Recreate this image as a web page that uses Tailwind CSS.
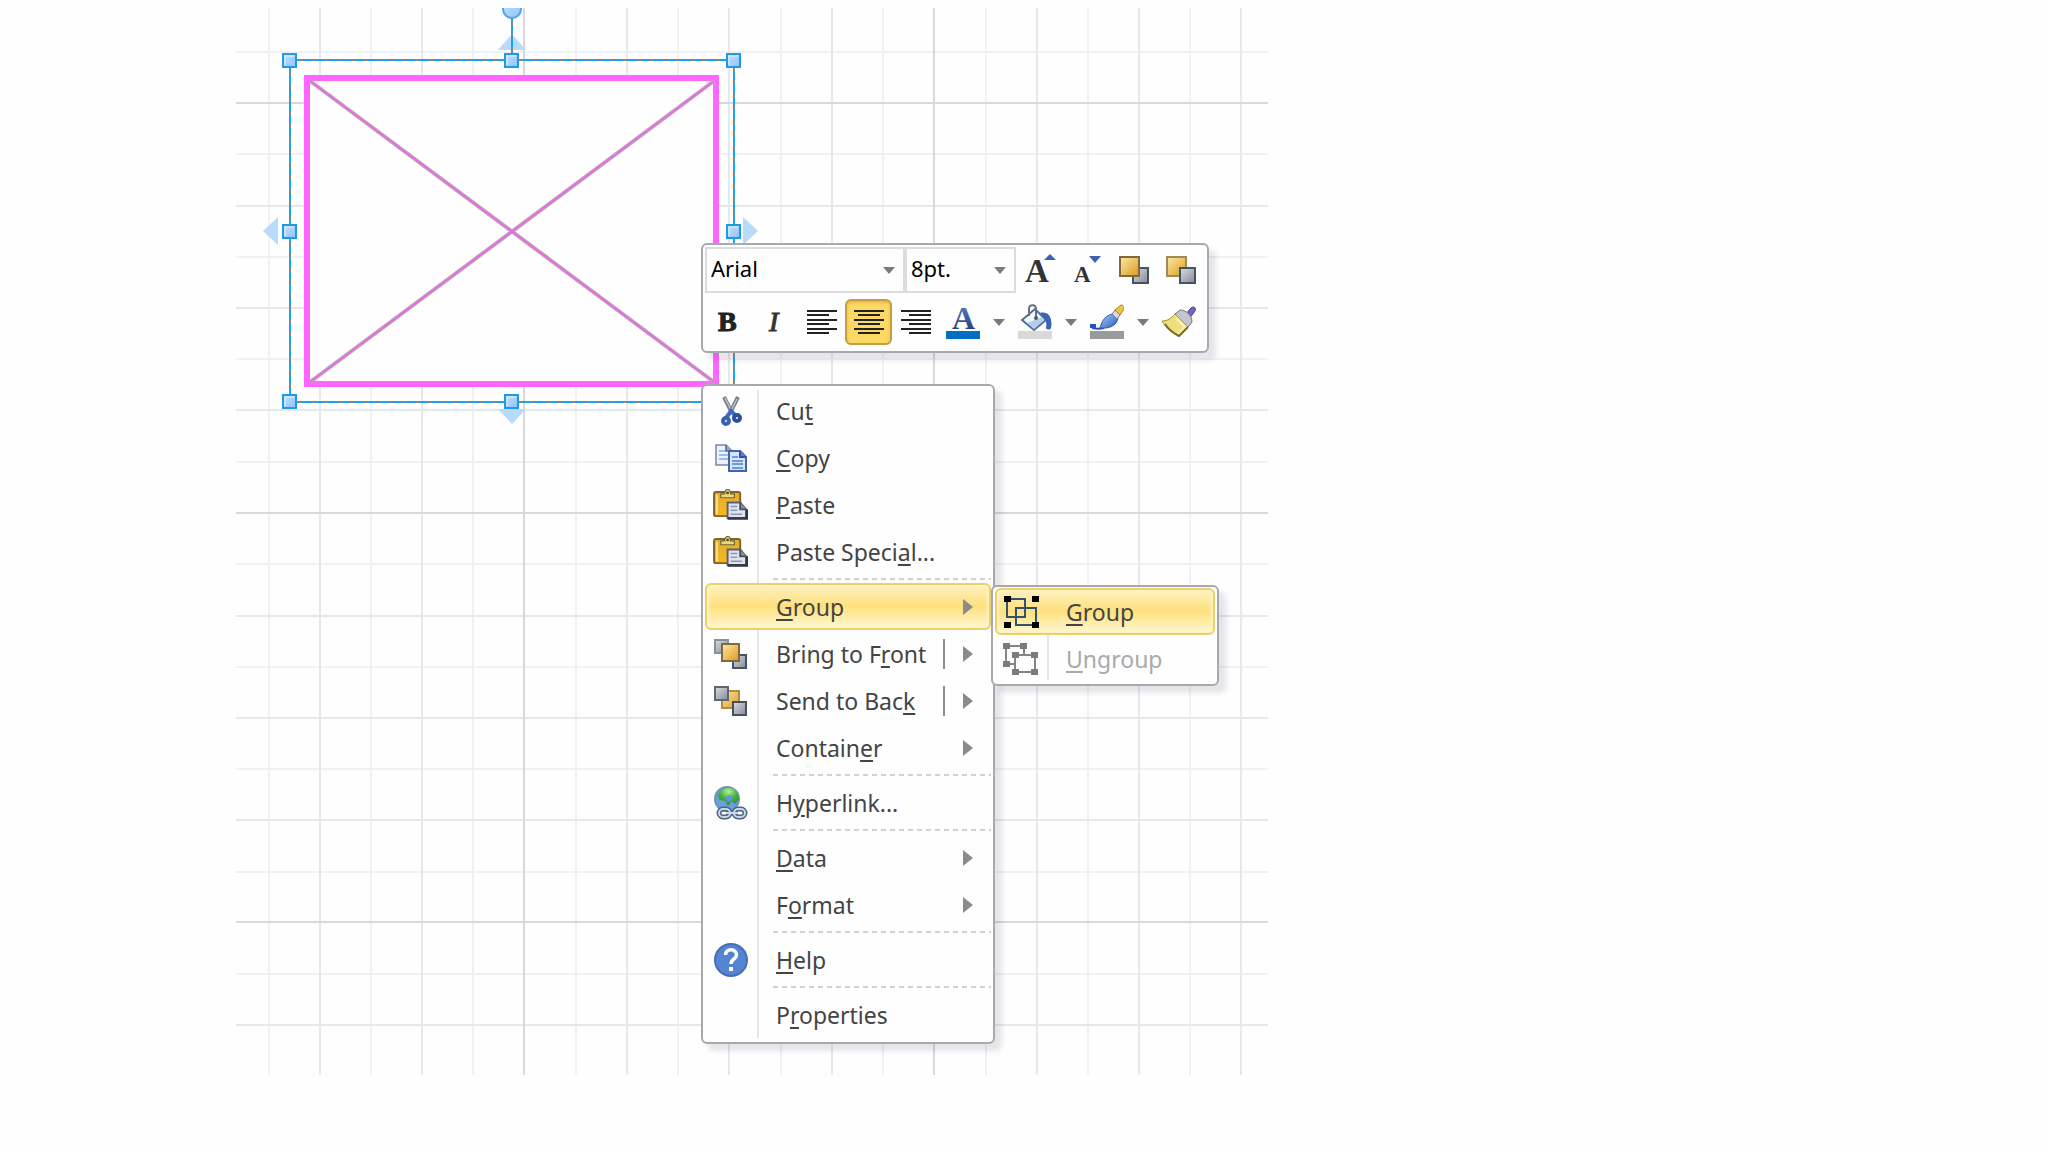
<!doctype html>
<html lang="en">
  <head>
    <meta charset="UTF-8" />
    <meta name="viewport" content="width=device-width, initial-scale=1.0" />
    <title>Drawing</title>
    <script src="https://cdn.jsdelivr.net/npm/@tailwindcss/browser@4"></script>
  </head>
  <body class="bg-[#fefefe] font-['Noto_Sans',sans-serif] text-[#444]">
    <!-- shared icon parts -->
    <svg class="absolute size-0" aria-hidden="true">
      <defs>
        <linearGradient id="gold" x1="0" y1="0" x2="1" y2="1">
          <stop offset="0" stop-color="#fde9a9" />
          <stop offset="1" stop-color="#dd9a1c" />
        </linearGradient>
        <linearGradient id="board" x1="0" y1="0" x2="0" y2="1">
          <stop offset="0" stop-color="#dcae3c" />
          <stop offset="1" stop-color="#f9b717" />
        </linearGradient>
        <linearGradient id="steel" x1="0" y1="0" x2="1" y2="1">
          <stop offset="0" stop-color="#d9dce3" />
          <stop offset="1" stop-color="#848b96" />
        </linearGradient>
        <linearGradient id="sky" x1="0" y1="0" x2="1" y2="1">
          <stop offset="0" stop-color="#c6e2ff" />
          <stop offset="1" stop-color="#8cc2fb" />
        </linearGradient>
        <linearGradient id="blue" x1="0" y1="0" x2="1" y2="1">
          <stop offset="0" stop-color="#a9cdf8" />
          <stop offset="1" stop-color="#2858b8" />
        </linearGradient>
        <linearGradient id="ink" x1="0" y1="0" x2="0" y2="1">
          <stop offset="0" stop-color="#5b8ad6" />
          <stop offset="1" stop-color="#1d3163" />
        </linearGradient>
        <radialGradient id="land" cx="0.5" cy="0.2" r="0.8">
          <stop offset="0" stop-color="#b5f09a" />
          <stop offset="0.5" stop-color="#45b53c" />
          <stop offset="1" stop-color="#2c8a33" />
        </radialGradient>
        <symbol id="arrow-right" viewBox="0 0 10 16">
          <path d="M0 0l10 8-10 8z" fill="#8b8b8b" />
        </symbol>
        <symbol id="arrow-down" viewBox="0 0 12 7">
          <path d="M0 0h12L6 7z" fill="#7b7b7b" />
        </symbol>
        <symbol id="handle" viewBox="0 0 15 15">
          <rect x="1" y="1" width="13" height="13" fill="url(#sky)" stroke="#1e9ae6" stroke-width="2" />
          <path d="M3 12V3h9" fill="none" stroke="#e2f1ff" stroke-width="1" />
        </symbol>
        <symbol id="paste" viewBox="0 0 36 32">
          <rect x="1" y="3" width="27" height="25" rx="2" fill="url(#board)" stroke="#80632a" stroke-width="2" />
          <path d="M4 6v20" stroke="#fbdc8a" stroke-width="2" />
          <path d="M8 9V5h4c0-6 6-6 6 0h4v4z" fill="#ead67c" stroke="#75652f" stroke-width="1.200" />
          <circle cx="15" cy="4" r="1.500" fill="#5d5026" />
          <path d="M15 14h13l6 7v9H15z" fill="#dfe3ee" stroke="#59606f" stroke-width="2" />
          <path d="M28 14v7h6" fill="#8a92a4" stroke="#4a5160" stroke-width="2" />
          <path d="M35 21v9.500H15" fill="none" stroke="#2f3644" stroke-width="2.500" />
          <path d="M18 18h7M18 22h7M18 26h12" stroke="#8d99b6" stroke-width="1.500" />
        </symbol>
      </defs>
    </svg>

    <main class="relative min-h-screen overflow-hidden">
      <!-- page grid and selected shape -->
      <svg class="absolute left-[236px] top-2 w-[1032px]" viewBox="236 8 1032 1067" fill="none" role="img" aria-label="Selected shape">
        <g stroke-width="2">
          <path stroke="#f2f0f4" d="M236 52h1032M236 154h1032M236 257h1032M236 359h1032M236 462h1032M236 564h1032M236 667h1032M236 769h1032M236 872h1032M236 974h1032M269 8v1067M371 8v1067M473 8v1067M576 8v1067M678 8v1067M781 8v1067M883 8v1067M986 8v1067M1088 8v1067M1190 8v1067" />
          <path stroke="#e9e7ec" d="M236 206h1032M236 308h1032M236 410h1032M236 616h1032M236 718h1032M236 820h1032M236 1025h1032M320 8v1067M422 8v1067M627 8v1067M729 8v1067M832 8v1067M1037 8v1067M1139 8v1067M1241 8v1067" />
          <path stroke="#d9d7dc" d="M236 103h1032M236 513h1032M236 922h1032M524 8v1067M934 8v1067" />
        </g>
        <path d="M498 50l14-16 14 16zM498 409l14 15 14-15zM278 217l-15 14 15 14zM743 217l15 14-15 14z" fill="#b9dafb" />
        <rect x="307" y="78" width="409" height="306" fill="#fffeff" stroke="#ff66ff" stroke-width="6" />
        <path d="M310 81l404 301M714 81L310 382" stroke="#c3a9bd" stroke-width="4" />
        <path d="M310 81l404 301M714 81L310 382" stroke="#dd72dc" stroke-width="2" />
        <path d="M290 60h444v342H290zM512 60V18" stroke="#8a8580" stroke-width="2" />
        <path d="M290 60h444v342H290zM512 60V18" stroke="#18a2f4" stroke-width="2" stroke-dasharray="9 4" />
        <circle cx="512" cy="9" r="9" fill="url(#sky)" stroke="#4da6e4" stroke-width="2" />
        <g>
          <use href="#handle" x="282" y="53" width="15" height="15" />
          <use href="#handle" x="504" y="53" width="15" height="15" />
          <use href="#handle" x="726" y="53" width="15" height="15" />
          <use href="#handle" x="282" y="224" width="15" height="15" />
          <use href="#handle" x="726" y="224" width="15" height="15" />
          <use href="#handle" x="282" y="394" width="15" height="15" />
          <use href="#handle" x="504" y="394" width="15" height="15" />
        </g>
      </svg>

      <!-- mini toolbar -->
      <div
        role="toolbar"
        aria-label="Formatting"
        class="absolute left-[701px] top-[243px] w-[508px] rounded-md border-2 border-[#a9a8ad] bg-[#fefefe] px-0.5 pt-0.5 shadow-[7px_7px_5px_rgba(60,50,80,0.12)]"
      >
        <div class="flex h-[46px] items-center text-black">
          <label class="relative flex w-[200px] items-center">
            <select aria-label="Font" class="h-[46px] w-full appearance-none border-2 border-[#dcdbdf] pb-1 pl-1 text-[22px]/[36px]">
              <option>Arial</option>
            </select>
            <svg class="pointer-events-none absolute right-2.5 h-[7px] w-3"><use href="#arrow-down" /></svg>
          </label>
          <label class="relative flex w-[111px] items-center">
            <select aria-label="Font size" class="h-[46px] w-full appearance-none border-2 border-[#dcdbdf] pb-1 pl-1 text-[22px]/[36px]">
              <option>8pt.</option>
            </select>
            <svg class="pointer-events-none absolute right-2.5 h-[7px] w-3"><use href="#arrow-down" /></svg>
          </label>
          <button aria-label="Grow font" class="flex w-[47px] justify-center">
            <svg class="h-8 w-8 overflow-visible" viewBox="0 0 32 32">
              <text x="1" y="28" font-family="Liberation Serif" font-weight="bold" font-size="33" fill="#333">A</text>
              <path d="M20 6h12l-6-6z" fill="#3d62b0" />
            </svg>
          </button>
          <button aria-label="Shrink font" class="flex w-[47px] justify-center">
            <svg class="h-8 w-8 overflow-visible" viewBox="0 0 32 32">
              <text x="3" y="28" font-family="Liberation Serif" font-weight="bold" font-size="23" fill="#333">A</text>
              <path d="M18 2h12l-6 7z" fill="#3d62b0" />
            </svg>
          </button>
          <button aria-label="Bring forward" class="flex w-[47px] justify-center">
            <svg class="h-7 w-8" viewBox="0 0 32 28">
              <rect x="15" y="12" width="15" height="15" fill="url(#steel)" stroke="#47525f" stroke-width="2" />
              <rect x="2" y="1" width="19" height="19" fill="url(#gold)" stroke="#806a3c" stroke-width="2" />
            </svg>
          </button>
          <button aria-label="Send backward" class="flex w-[47px] justify-center">
            <svg class="h-7 w-8" viewBox="0 0 32 28">
              <rect x="2" y="1" width="19" height="19" fill="url(#gold)" stroke="#a08a58" stroke-width="2" />
              <rect x="15" y="12" width="15" height="15" fill="url(#steel)" stroke="#47525f" stroke-width="2" />
            </svg>
          </button>
        </div>

        <div class="flex h-[58px] items-center">
          <button aria-label="Bold" class="flex w-[46px] justify-center">
            <svg class="h-6 w-6 overflow-visible" viewBox="0 0 24 24">
              <text x="2" y="21" font-family="Liberation Serif" font-weight="bold" font-size="28" fill="#222" stroke="#222">B</text>
            </svg>
          </button>
          <button aria-label="Italic" class="flex w-[47px] justify-center">
            <svg class="h-6 w-6 overflow-visible" viewBox="0 0 24 24">
              <text x="6" y="21" font-family="Liberation Serif" font-style="italic" font-size="28" fill="#333" stroke="#333">I</text>
            </svg>
          </button>
          <button aria-label="Align left" class="flex w-[47px] justify-center">
            <svg class="h-6 w-[30px]" viewBox="0 0 30 24" stroke="#222" stroke-width="2">
              <path d="M0 1h30M0 5h22M0 10h30M0 14h22M0 19h30M0 23h22" />
            </svg>
          </button>
          <button aria-label="Center" aria-pressed="true" class="flex h-[46px] w-[47px] items-center justify-center rounded-md border-2 border-[#c79c45] bg-[#fcd963] shadow-[inset_0_2px_3px_#e8b64c]">
            <svg class="h-6 w-[30px]" viewBox="0 0 30 24" stroke="#222" stroke-width="2">
              <path d="M0 1h30M4 5h22M0 10h30M4 14h22M0 19h30M4 23h22" />
            </svg>
          </button>
          <button aria-label="Align right" class="flex w-[47px] justify-center">
            <svg class="h-6 w-[30px]" viewBox="0 0 30 24" stroke="#222" stroke-width="2">
              <path d="M0 1h30M8 5h22M0 10h30M8 14h22M0 19h30M8 23h22" />
            </svg>
          </button>
          <button aria-label="Font color" class="flex w-12 justify-center">
            <svg class="h-9 w-[34px] overflow-visible" viewBox="0 0 34 36">
              <text x="6" y="25" font-family="Liberation Serif" font-weight="bold" font-size="32" fill="url(#ink)">A</text>
              <rect y="27" width="34" height="8" fill="#0070c0" />
            </svg>
          </button>
          <button aria-label="Font color options" class="flex w-6 justify-center">
            <svg class="h-[7px] w-3"><use href="#arrow-down" /></svg>
          </button>
          <button aria-label="Fill" class="flex w-12 justify-center">
            <svg class="h-9 w-[34px]" viewBox="0 0 34 36">
              <path d="M4 16L17 5l11 11-12 10z" fill="#f2f7fc" stroke="#4d6d9c" stroke-width="2" />
              <path d="M9 19L24 13l2 3-10 9z" fill="#b3cdea" />
              <path d="M11 12V5c0-5 7-5 7 0v9" fill="none" stroke="#66717e" stroke-width="2" />
              <circle cx="18" cy="14" r="2" fill="#48596c" />
              <path d="M22 9c8-2 13 4 11 15-1 2-4 2-5 0 1-6 0-9-6-15z" fill="#3c63b8" />
              <rect y="27" width="34" height="8" fill="#d9d9d9" />
            </svg>
          </button>
          <button aria-label="Fill options" class="flex w-6 justify-center">
            <svg class="h-[7px] w-3"><use href="#arrow-down" /></svg>
          </button>
          <button aria-label="Line" class="flex w-12 justify-center">
            <svg class="h-9 w-[34px]" viewBox="0 0 34 36">
              <path d="M2 24c5 1 8 1 12 0" fill="none" stroke="#2b57b4" stroke-width="2" />
              <path d="M0 20h6v4H0z" fill="#2554b5" />
              <path d="M10 24c2-8 6-13 13-14l5 4c-1 6-6 11-18 10z" fill="url(#blue)" stroke="#2f5eb2" />
              <path d="M22 10l3-4 5 5-3 4z" fill="#d5d9e2" stroke="#707a8c" />
              <path d="M25 6l6-5c2 0 4 2 3 4l-4 6z" fill="#f0c53c" stroke="#a4801e" />
              <rect y="27" width="34" height="8" fill="#9a9c9b" />
            </svg>
          </button>
          <button aria-label="Line options" class="flex w-6 justify-center">
            <svg class="h-[7px] w-3"><use href="#arrow-down" /></svg>
          </button>
          <button aria-label="Format painter" class="flex w-12 justify-center">
            <svg class="h-8 w-[34px]" viewBox="0 0 34 32">
              <path d="M23 9l6-7c3-3 6 1 4 3l-6 8z" fill="#7a5fc2" stroke="#54409a" />
              <path d="M13 8l5-4c6 0 12 5 12 12l-4 5z" fill="#c3c6ce" stroke="#6c7078" />
              <path d="M13 8l13 13-9 9C10 27 4 22 0 15c6 0 9-3 13-7z" fill="#eadf7c" stroke="#a19440" />
              <path d="M14 12l9 9-7 7" fill="none" stroke="#f7f1b0" stroke-width="3" />
              <path d="M3 18c3 5 8 9 14 12l9-9" fill="none" stroke="#7d6a1d" stroke-width="2" />
            </svg>
          </button>
        </div>
      </div>

      <!-- context menu -->
      <div
        role="menu"
        aria-label="Shape"
        class="absolute left-[701px] top-[384px] w-[294px] rounded-md border-2 border-[#a9a8ad] bg-[#fefefe] px-0.5 pt-px pb-1 text-[23px]/[30px] shadow-[7px_7px_5px_rgba(60,50,80,0.12)]"
      >
        <div class="absolute inset-y-1 left-[54px] w-0.5 bg-[#e6e5e9]"></div>
        <button role="menuitem" class="relative flex h-[47px] w-full items-center">
          <span class="flex w-[51px] justify-center">
            <svg class="h-[30px] w-6" viewBox="0 0 24 30" fill="none">
              <path d="M5 1l7 14M19 1l-7 14" stroke="#7d828b" stroke-width="4" />
              <path d="M6 2l6 12M18 3l-5 10" stroke="#d9dce0" stroke-width="1" />
              <path d="M7 22l5-7 5 5" stroke="#3f68bf" stroke-width="4" />
              <circle cx="7" cy="25" r="3" stroke="#3960b4" stroke-width="4" />
              <circle cx="18" cy="22" r="3" stroke="#2c4f9f" stroke-width="4" />
            </svg>
          </span>
          <span class="pl-5">Cu<span class="underline decoration-2 underline-offset-3">t</span></span>
        </button>
        <button role="menuitem" class="relative flex h-[47px] w-full items-center">
          <span class="flex w-[51px] justify-center">
            <svg class="h-7 w-8" viewBox="0 0 32 28" fill="none">
              <path d="M1 1h10l6 6v14H1z" fill="#edf3fc" stroke="#7886a3" stroke-width="1.500" />
              <path d="M11 1v6h6" fill="#9ba9c4" stroke="#56647f" stroke-width="1.500" />
              <path d="M4 7h6M4 11h9M4 15h9" stroke="#86a9de" stroke-width="1.500" />
              <path d="M14 7h11l6 6v14H14z" fill="#d6e5fb" stroke="#4365ac" stroke-width="2" />
              <path d="M25 7v6h6" fill="#5f86d0" stroke="#3454a0" stroke-width="2" />
              <path d="M17 13h6M17 17h11M17 20h11M17 24h11" stroke="#5080d0" stroke-width="1.500" />
            </svg>
          </span>
          <span class="pl-5"><span class="underline decoration-2 underline-offset-3">C</span>opy</span>
        </button>
        <button role="menuitem" class="relative flex h-[47px] w-full items-center">
          <span class="flex w-[51px] justify-center"><svg class="h-[31px] w-[35px]"><use href="#paste" /></svg></span>
          <span class="pl-5"><span class="underline decoration-2 underline-offset-3">P</span>aste</span>
        </button>
        <button role="menuitem" class="relative flex h-[47px] w-full items-center">
          <span class="flex w-[51px] justify-center"><svg class="h-[31px] w-[35px]"><use href="#paste" /></svg></span>
          <span class="pl-5">Paste Speci<span class="underline decoration-2 underline-offset-3">a</span>l...</span>
        </button>
        <div role="separator" class="flex h-2 items-center pl-[68px]">
          <div class="h-0.5 grow bg-[repeating-linear-gradient(90deg,#d2d1d5_0_5px,transparent_5px_9px)]"></div>
        </div>
        <button
          role="menuitem"
          aria-expanded="true"
          class="relative flex h-[47px] w-full items-center rounded-md border-2 border-[#ecd06c] bg-linear-to-b from-[#fdf0bd] via-[#fee07c] to-[#fff7cf] shadow-[inset_0_0_3px_2px_#fff3c4]"
        >
          <span class="w-[49px]"></span>
          <span class="grow pl-5 text-left"><span class="underline decoration-2 underline-offset-3">G</span>roup</span>
          <svg class="mr-4 h-4 w-2.5"><use href="#arrow-right" /></svg>
        </button>
        <button role="menuitem" class="relative flex h-[47px] w-full items-center">
          <span class="flex w-[51px] justify-center">
            <svg class="h-[30px] w-[33px]" viewBox="0 0 33 30" stroke-width="2">
              <rect x="1" y="1" width="13" height="13" fill="url(#steel)" stroke="#8a8f9c" />
              <rect x="19" y="16" width="13" height="13" fill="url(#steel)" stroke="#47525f" />
              <rect x="8" y="5" width="17" height="17" fill="url(#gold)" stroke="#806a3c" />
            </svg>
          </span>
          <span class="grow pl-5 text-left">Bring to F<span class="underline decoration-2 underline-offset-3">r</span>ont</span>
          <span class="mr-[18px] h-[30px] w-0.5 bg-[#8f8f93]"></span>
          <svg class="mr-[18px] h-4 w-2.5"><use href="#arrow-right" /></svg>
        </button>
        <button role="menuitem" class="relative flex h-[47px] w-full items-center">
          <span class="flex w-[51px] justify-center">
            <svg class="h-[30px] w-[33px]" viewBox="0 0 33 30" stroke-width="2">
              <rect x="8" y="5" width="17" height="17" fill="url(#gold)" stroke="#b18c3c" />
              <rect x="1" y="1" width="13" height="13" fill="url(#steel)" stroke="#5f6573" />
              <rect x="19" y="16" width="13" height="13" fill="url(#steel)" stroke="#47525f" />
            </svg>
          </span>
          <span class="grow pl-5 text-left">Send to Bac<span class="underline decoration-2 underline-offset-3">k</span></span>
          <span class="mr-[18px] h-[30px] w-0.5 bg-[#8f8f93]"></span>
          <svg class="mr-[18px] h-4 w-2.5"><use href="#arrow-right" /></svg>
        </button>
        <button role="menuitem" class="relative flex h-[47px] w-full items-center">
          <span class="w-[51px]"></span>
          <span class="grow pl-5 text-left">Contain<span class="underline decoration-2 underline-offset-3">e</span>r</span>
          <svg class="mr-[18px] h-4 w-2.5"><use href="#arrow-right" /></svg>
        </button>
        <div role="separator" class="flex h-2 items-center pl-[68px]">
          <div class="h-0.5 grow bg-[repeating-linear-gradient(90deg,#d2d1d5_0_5px,transparent_5px_9px)]"></div>
        </div>
        <button role="menuitem" class="relative flex h-[47px] w-full items-center">
          <span class="flex w-[51px] justify-center">
            <svg class="h-[34px] w-[34px]" viewBox="0 0 34 34" fill="none">
              <circle cx="13" cy="13" r="12" fill="#6b9ee4" stroke="#6d93ad" stroke-width="2" />
              <path d="M4 9c2-5 8-8 13-7 5 2 8 6 8 11l-4 5-3-3-4 5-3-5-6-1z" fill="url(#land)" />
              <path d="M11 11l5-2 3 2-2 4-4 1z" fill="#5f96dd" />
              <g stroke="#4b6482" stroke-width="5">
                <rect x="5" y="23" width="11" height="8" rx="4" />
                <rect x="20" y="23" width="11" height="8" rx="4" />
                <path d="M12 27h12" />
              </g>
              <g stroke="#c9d8e8" stroke-width="2">
                <rect x="5" y="23" width="11" height="8" rx="4" />
                <rect x="20" y="23" width="11" height="8" rx="4" />
                <path d="M12 27h12" />
              </g>
            </svg>
          </span>
          <span class="pl-5">H<span class="underline decoration-2 underline-offset-3">y</span>perlink...</span>
        </button>
        <div role="separator" class="flex h-2 items-center pl-[68px]">
          <div class="h-0.5 grow bg-[repeating-linear-gradient(90deg,#d2d1d5_0_5px,transparent_5px_9px)]"></div>
        </div>
        <button role="menuitem" class="relative flex h-[47px] w-full items-center">
          <span class="w-[51px]"></span>
          <span class="grow pl-5 text-left"><span class="underline decoration-2 underline-offset-3">D</span>ata</span>
          <svg class="mr-[18px] h-4 w-2.5"><use href="#arrow-right" /></svg>
        </button>
        <button role="menuitem" class="relative flex h-[47px] w-full items-center">
          <span class="w-[51px]"></span>
          <span class="grow pl-5 text-left">F<span class="underline decoration-2 underline-offset-3">o</span>rmat</span>
          <svg class="mr-[18px] h-4 w-2.5"><use href="#arrow-right" /></svg>
        </button>
        <div role="separator" class="flex h-2 items-center pl-[68px]">
          <div class="h-0.5 grow bg-[repeating-linear-gradient(90deg,#d2d1d5_0_5px,transparent_5px_9px)]"></div>
        </div>
        <button role="menuitem" class="relative flex h-[47px] w-full items-center">
          <span class="flex w-[51px] justify-center">
            <svg class="h-[34px] w-[34px]" viewBox="0 0 34 34" fill="none">
              <circle cx="17" cy="17" r="16" fill="#5484d2" stroke="#456fb6" stroke-width="2" />
              <path d="M11.500 12c0-7 11-7 11 0 0 4-5.500 4-5.500 9" stroke="#fff" stroke-width="3.500" />
              <path d="M15 24h4v4h-4z" fill="#fff" />
            </svg>
          </span>
          <span class="pl-5"><span class="underline decoration-2 underline-offset-3">H</span>elp</span>
        </button>
        <div role="separator" class="flex h-2 items-center pl-[68px]">
          <div class="h-0.5 grow bg-[repeating-linear-gradient(90deg,#d2d1d5_0_5px,transparent_5px_9px)]"></div>
        </div>
        <button role="menuitem" class="relative flex h-[47px] w-full items-center">
          <span class="w-[51px]"></span>
          <span class="pl-5">P<span class="underline decoration-2 underline-offset-3">r</span>operties</span>
        </button>
      </div>

      <!-- group submenu -->
      <div
        role="menu"
        aria-label="Group"
        class="absolute left-[991px] top-[585px] w-[228px] rounded-md border-2 border-[#a9a8ad] bg-[#fefefe] px-0.5 pt-px pb-0.5 text-[23px]/[30px] shadow-[7px_7px_5px_rgba(60,50,80,0.12)]"
      >
        <div class="absolute inset-y-1 left-[54px] w-0.5 bg-[#e6e5e9]"></div>
        <button
          role="menuitem"
          class="relative flex h-[47px] w-full items-center rounded-md border-2 border-[#ecd06c] bg-linear-to-b from-[#fdf0bd] via-[#fee07c] to-[#fff7cf] shadow-[inset_0_0_3px_2px_#fff3c4]"
        >
          <span class="flex w-[49px] justify-center">
            <svg class="h-8 w-[35px]" viewBox="0 0 35 32" fill="none">
              <path d="M3 3h18v18H3zM12 12h20v17H12z" stroke="#32536b" stroke-width="2" />
              <path d="M0 0h7v6H0zM28 0h7v6h-7zM0 26h7v6H0zM28 26h7v6h-7z" fill="#000" />
            </svg>
          </span>
          <span class="pl-5"><span class="underline decoration-2 underline-offset-3">G</span>roup</span>
        </button>
        <button role="menuitem" disabled class="relative flex h-[47px] w-full items-center text-[#a9a9ad]">
          <span class="flex w-[51px] justify-center">
            <svg class="h-8 w-[35px]" viewBox="0 0 35 32" fill="none">
              <path d="M21 12V3H3v18h9M12 12h20v17H12z" stroke="#858585" stroke-width="2" />
              <path d="M0 0h7v6H0zM17 0h7v6h-7zM0 18h7v6H0zM9 9h7v6H9zM28 9h7v6h-7zM9 26h7v6H9zM28 26h7v6h-7z" fill="#7b7b7b" />
            </svg>
          </span>
          <span class="pl-5"><span class="underline decoration-2 underline-offset-3">U</span>ngroup</span>
        </button>
      </div>
    </main>
  </body>
</html>
